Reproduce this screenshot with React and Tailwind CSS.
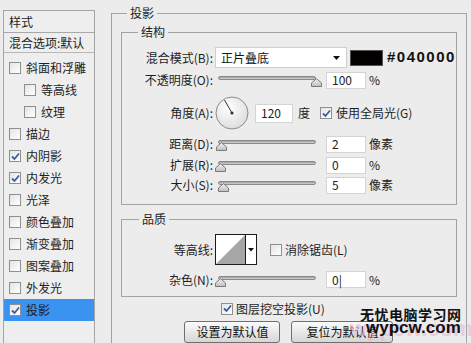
const cjk = { fontFamily: '"Noto Sans CJK SC", "Liberation Sans", sans-serif' };

const layerRows = [
  { label: "斜面和浮雕", checked: false },
  { label: "等高线", checked: false, indent: true },
  { label: "纹理", checked: false, indent: true },
  { label: "描边", checked: false },
  { label: "内阴影", checked: true },
  { label: "内发光", checked: true },
  { label: "光泽", checked: false },
  { label: "颜色叠加", checked: false },
  { label: "渐变叠加", checked: false },
  { label: "图案叠加", checked: false },
  { label: "外发光", checked: false },
  { label: "投影", checked: true, active: true },
];

function Check({ checked }) {
  return (
    <span className="flex h-[12px] w-[12px] shrink-0 items-center justify-center border border-[#8f8f8f] bg-gradient-to-br from-[#e4e4e4] to-[#ffffff]">
      {checked ? (
        <svg width="9" height="9" viewBox="0 0 9 9">
          <path d="M1 4.5 L3.5 7 L8 1.5" fill="none" stroke="#3b5aa8" strokeWidth="1.8" />
        </svg>
      ) : null}
    </span>
  );
}

function Slider({ at }) {
  return (
    <div className="relative h-[16px] w-[106px] shrink-0">
      <div className="absolute left-[3px] right-[5px] top-[4px] h-[4px] rounded-full border border-[#8a8a8a] bg-gradient-to-b from-[#9a9a9a] to-[#d6d6d6]" />
      <svg className="absolute top-[6px]" style={{ left: at }} width="11" height="9" viewBox="0 0 11 9">
        <defs>
          <linearGradient id="thumb" x1="0" y1="0" x2="0" y2="1">
            <stop offset="0" stopColor="#f4f4f4" />
            <stop offset="1" stopColor="#bdbdbd" />
          </linearGradient>
        </defs>
        <path d="M0.5 8.5 L0.5 5 L5.5 0.7 L10.5 5 L10.5 8.5 Z" fill="url(#thumb)" stroke="#7a7a7a" />
      </svg>
    </div>
  );
}

function Field({ value, className = "w-[40px] h-[17px]" }) {
  return (
    <div className={`flex shrink-0 items-center border border-[#d4d4d4] bg-white pl-[5px] text-[12px] text-[#222] ${className}`}>
      {value}
    </div>
  );
}

function Label({ children, width = "w-[93px]" }) {
  return <span className={`${width} shrink-0 pr-[2px] text-right text-[12px] text-[#1e1e1e]`}>{children}</span>;
}

function SliderRow({ label, at, value, unit, className }) {
  return (
    <div className={`flex h-[18px] items-center ${className}`}>
      <Label>{label}</Label>
      <Slider at={at} />
      <Field value={value} className="ml-[5px] h-[17px] w-[40px]" />
      <span className="ml-[3px] text-[12px] text-[#222]">{unit}</span>
    </div>
  );
}

function Dial() {
  return (
    <svg width="34" height="34" viewBox="0 0 34 34" className="shrink-0">
      <defs>
        <radialGradient id="dial" cx="0.4" cy="0.35" r="0.7">
          <stop offset="0" stopColor="#ffffff" />
          <stop offset="1" stopColor="#dcdcdc" />
        </radialGradient>
      </defs>
      <circle cx="17" cy="17" r="16" fill="url(#dial)" stroke="#8c8c8c" />
      <line x1="17" y1="17" x2="9.5" y2="4" stroke="#333" strokeWidth="1" />
      <circle cx="17" cy="17" r="1.6" fill="#333" />
    </svg>
  );
}

function Contour() {
  return (
    <div className="flex h-[31px] w-[42px] shrink-0 border border-[#1a1a1a] bg-white">
      <svg width="29" height="29" viewBox="0 0 29 29">
        <path d="M0 29 L29 0 L29 29 Z" fill="#a6a6a6" />
      </svg>
      <div className="flex flex-1 items-center justify-center border-l border-[#1a1a1a]">
        <svg width="6" height="4" viewBox="0 0 6 4">
          <path d="M0 0 L6 0 L3 3.5 Z" fill="#111" />
        </svg>
      </div>
    </div>
  );
}

export default function App() {
  return (
    <div className="relative flex h-[343px] w-[471px] overflow-hidden bg-[#ececec]" style={cjk}>
      <div className="ml-[3px] mt-[10px] h-[340px] w-[92px] shrink-0 border border-[#a4a4a4] bg-[#eeeeee]">
        <div className="flex h-[22px] items-center border-b border-[#a8a8a8] pl-[5px] text-[12px] text-[#1e1e1e]">样式</div>
        <div className="flex h-[20px] items-center border-b border-[#b8b8b8] pl-[5px] text-[12px] text-[#1e1e1e]">混合选项:默认</div>
        <div className="pt-[4px]">
          {layerRows.map((row) => (
            <div
              key={row.label}
              className={`flex h-[22px] items-center gap-[5px] text-[12px] text-[#1e1e1e] ${row.indent ? "pl-[20px]" : "pl-[5px]"} ${row.active ? "bg-[#3a93f0]" : ""}`}
            >
              <Check checked={row.checked} />
              <span>{row.label}</span>
            </div>
          ))}
        </div>
      </div>

      <fieldset className="ml-[16px] mt-[5px] h-[350px] w-[355px] shrink-0 border border-[#a2a2a2] px-[9px]">
        <legend className="ml-[6px] px-[3px] text-[12px] leading-[16px] text-[#1e1e1e]">投影</legend>

        <fieldset className="mt-[3px] border border-[#a2a2a2] pb-[10px] pt-[7px]">
          <legend className="ml-[16px] px-[3px] text-[12px] leading-[16px] text-[#1e1e1e]">结构</legend>

          <div className="flex h-[21px] items-center">
            <Label>混合模式(B):</Label>
            <div className="flex h-[21px] w-[132px] shrink-0 items-center justify-between border border-[#cfcfcf] bg-white pl-[5px] pr-[6px] text-[12px] text-[#111]">
              正片叠底
              <svg width="7" height="4" viewBox="0 0 7 4">
                <path d="M0 0 L7 0 L3.5 4 Z" fill="#111" />
              </svg>
            </div>
            <div className="ml-[3px] h-[16px] w-[33px] shrink-0 border border-[#555] bg-[#040000]" />
            <span
              className="ml-[4px] whitespace-nowrap text-[15px] font-bold tracking-[1.5px] text-[#111]"
              style={{ fontFamily: '"Liberation Sans", Arial, sans-serif' }}
            >
              #040000
            </span>
          </div>

          <div className="mt-[2px] flex h-[20px] items-center">
            <Label>不透明度(O):</Label>
            <Slider at={96} />
            <Field value="100" className="ml-[5px] h-[17px] w-[40px]" />
            <span className="ml-[3px] text-[12px] text-[#222]">%</span>
          </div>

          <div className="mt-[6px] flex h-[34px] items-center">
            <Label>角度(A):</Label>
            <Dial />
            <Field value="120" className="ml-[6px] h-[19px] w-[38px]" />
            <span className="ml-[5px] text-[12px] text-[#222]">度</span>
            <span className="ml-[10px]">
              <Check checked />
            </span>
            <span className="ml-[4px] text-[12px] text-[#1e1e1e]">使用全局光(G)</span>
          </div>

          <SliderRow label="距离(D):" at={1} value="2" unit="像素" className="mt-[5px]" />
          <SliderRow label="扩展(R):" at={0} value="0" unit="%" className="mt-[3px]" />
          <SliderRow label="大小(S):" at={3} value="5" unit="像素" className="mt-[2px]" />
        </fieldset>

        <fieldset className="mt-[6px] border border-[#a2a2a2] pb-[8px] pt-[7px]">
          <legend className="ml-[17px] px-[3px] text-[12px] leading-[16px] text-[#1e1e1e]">品质</legend>

          <div className="flex h-[31px] items-center">
            <Label>等高线:</Label>
            <Contour />
            <span className="ml-[13px]">
              <Check />
            </span>
            <span className="ml-[3px] text-[12px] text-[#1e1e1e]">消除锯齿(L)</span>
          </div>

          <div className="mt-[6px] flex h-[17px] items-center">
            <Label>杂色(N):</Label>
            <Slider at={0} />
            <Field value="0|" className="ml-[5px] h-[17px] w-[40px]" />
            <span className="ml-[3px] text-[12px] text-[#222]">%</span>
          </div>
        </fieldset>

        <div className="ml-[100px] mt-[4px] flex h-[15px] items-center">
          <Check checked />
          <span className="ml-[3px] text-[12px] text-[#1e1e1e]">图层挖空投影(U)</span>
        </div>

        <div className="mt-[5px] flex justify-center gap-[11px]">
          <div className="flex h-[22px] w-[96px] items-center justify-center rounded-[3px] border border-[#6f6f6f] bg-gradient-to-b from-[#fbfbfb] to-[#d6d6d6] text-[12px] text-[#111]">
            设置为默认值
          </div>
          <div className="flex h-[22px] w-[102px] items-center justify-center rounded-[3px] border border-[#6f6f6f] bg-gradient-to-b from-[#fbfbfb] to-[#d6d6d6] text-[12px] text-[#111]">
            复位为默认值
          </div>
        </div>
      </fieldset>

      <div className="pointer-events-none absolute left-[350px] top-[318px] text-[22px] font-bold leading-[22px] text-[#e7b9d4] opacity-60" style={{ fontFamily: '"Liberation Sans", Arial, sans-serif' }}>
        wypcw.com
      </div>
      <div className="pointer-events-none absolute left-[360px] top-[305px] text-[14px] font-bold leading-[18px] tracking-[0.5px] text-[#111]">
        无忧电脑学习网
      </div>
      <div className="pointer-events-none absolute left-[366px] top-[319px] text-[17px] font-bold leading-[17px] text-[#111]" style={{ fontFamily: '"Liberation Sans", Arial, sans-serif' }}>
        wypcw.com
      </div>
    </div>
  );
}
